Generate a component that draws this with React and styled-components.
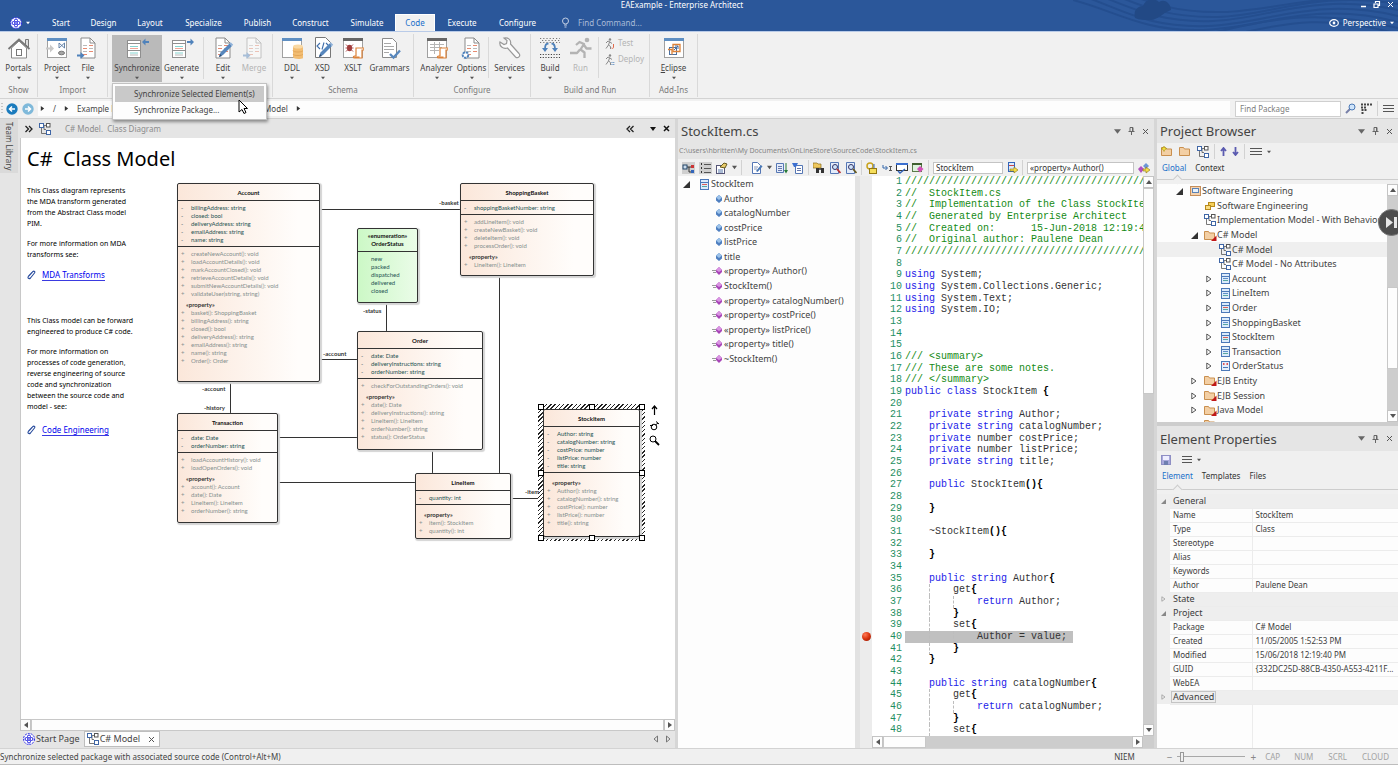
import React from "react";
import styled, { createGlobalStyle, css } from "styled-components";

// ------------------ Global ------------------
const GlobalStyle = createGlobalStyle`
  * {
    box-sizing: border-box;
  }

  body {
    margin: 0;
    background: #e5e5e5;
    color: #444;
    font-family: "Noto Sans", "Open Sans", sans-serif;
    font-size: 8px;
    line-height: 12px;
    overflow: hidden;
  }

  button, input {
    font: inherit;
    color: inherit;
    border: 0;
    padding: 0;
    margin: 0;
    background: none;
  }

  svg {
    display: block;
    flex: none;
  }
`;

const Window = styled.div`
  display: flex;
  flex-direction: column;
  height: 100vh;
  min-height: 600px;
  white-space: nowrap;
`;

// ------------------ Title bar and tabs ------------------
const Header = styled.header`
  position: relative;
  flex: none;
  display: grid;
  grid-template-rows: 14px 17px;
  background: #2b579a;
  color: #fff;
  overflow: hidden;
`;

const Swirl = styled.svg`
  position: absolute;
  right: 0;
  top: 0;
`;

const TitleRow = styled.div`
  position: relative;
  display: flex;
  align-items: center;
  justify-content: center;
  padding: 0 34px 4px 0;
  line-height: 10px;
`;

const WindowButtons = styled.div`
  position: absolute;
  right: 4px;
  top: 0;
  display: flex;
  gap: 6px;
`;

const TabRow = styled.div`
  position: relative;
  display: flex;
  align-items: stretch;
`;

const AppButton = styled.button`
  display: flex;
  align-items: center;
  gap: 4px;
  width: 41px;
  padding-left: 10px;
`;

const RibbonTab = styled.button`
  width: ${(p) => p.$w}px;
  font-size: 8px;
  ${(p) =>
    p.$active &&
    css`
      background: #f1f1f1;
      color: #1a6fc9;
      border: 1px solid #fff;
      border-bottom: 0;
    `}
`;

const FindCommand = styled.label`
  display: flex;
  align-items: center;
  gap: 8px;
  padding-left: 15px;
  color: #a9bbd8;

  input {
    width: 90px;
  }
  input::placeholder {
    color: #a9bbd8;
    opacity: 1;
  }
`;

const Perspective = styled.button`
  display: flex;
  align-items: center;
  gap: 4px;
  margin-left: auto;
  padding-right: 4px;
`;

// ------------------ Ribbon ------------------
const Ribbon = styled.div`
  flex: none;
  display: flex;
  height: 68px;
  padding: 2px 0 1px;
  background: #f1f1f1;
  border-top: 1px solid #b9cbe8;
  border-bottom: 1px solid #d3d3d3;
`;

const Group = styled.section`
  display: flex;
  flex-direction: column;
  border-right: 1px solid #d9d9d9;
`;

const GroupButtons = styled.div`
  display: flex;
  height: 50px;
  padding: 1px ${(p) => p.$right || 0}px 0 ${(p) => p.$left || 0}px;
`;

const GroupLabel = styled.div`
  text-align: center;
  color: #7b7b7b;
  line-height: 14px;
`;

const GroupSep = styled.div`
  width: 1px;
  margin: 2px 0 5px ${(p) => p.$gap}px;
  background: #d9d9d9;
`;

const ToolWrap = styled.div`
  position: relative;
`;

const Tool = styled.button`
  display: flex;
  flex-direction: column;
  align-items: center;
  width: ${(p) => p.$w}px;
  height: 47px;
  padding-top: 1px;
  color: ${(p) => (p.disabled ? "#b4b4b4" : "#444")};
  background: ${(p) => (p.$active ? "#bababa" : "none")};

  span {
    line-height: 16px;
  }
`;

const SmallTools = styled.div`
  display: flex;
  flex-direction: column;
  gap: 4px;
  width: 50px;
  padding: 2px 0 0 5px;
`;

const SmallTool = styled.button`
  display: flex;
  align-items: center;
  gap: 3px;
  height: 12px;
  color: #b4b4b4;
`;

const Menu = styled.div`
  position: absolute;
  z-index: 10;
  top: 48px;
  left: 0;
  width: 155px;
  padding: 2px;
  background: #fdfdfd;
  border: 1px solid #c2c2c2;
  box-shadow: 1px 2px 3px rgba(0, 0, 0, 0.4);
`;

const MenuItem = styled.button`
  display: block;
  width: 100%;
  height: ${(p) => (p.$active ? 16 : 15)}px;
  padding-left: 19px;
  text-align: left;
  color: #444;
  background: ${(p) => (p.$active ? "#c9c9c9" : "none")};
`;

const Cursor = styled.svg`
  position: absolute;
  left: 125px;
  top: 15px;
`;

// ------------------ Address bar ------------------
const AddressBar = styled.div`
  flex: none;
  display: flex;
  align-items: center;
  height: 19px;
  padding-left: 1px;
  background: #f1f1f1;
`;

const Crumbs = styled.nav`
  flex: 1;
  display: flex;
  align-items: center;
  gap: 8px;
  height: 15px;
  margin: 0 5px 0 4px;
  padding-left: 2px;
  background: #fdfdfd;
`;

const Crumb = styled.a`
  margin-left: ${(p) => p.$before || 0}px;
  color: #444;
  text-decoration: none;
`;

const FindPackage = styled.input`
  width: 106px;
  height: 16px;
  padding: 0 4px;
  background: #fff;
  border: 1px solid #cfcfcf;

  &::placeholder {
    color: #7d7d7d;
    opacity: 1;
  }
`;

const AddressTools = styled.div`
  display: flex;
  align-items: center;
  gap: 5px;
  width: 57px;
  padding-left: 4px;
`;

// ------------------ Shared panel parts ------------------
const Main = styled.main`
  flex: 1;
  min-height: 0;
  display: grid;
  grid-template-columns: 20px minmax(0, 655fr) minmax(0, 479fr) minmax(0, 244fr);
  background: #dcdcdc;
  border-top: 1px solid #cfcfcf;
`;

const SideStrip = styled.div`
  background: #e5e5e5;
`;

const SideTab = styled.button`
  width: 18px;
  height: 54px;
  writing-mode: vertical-rl;
  background: #dadada;
  font-size: 8px;
`;

const Panel = styled.section`
  display: flex;
  flex-direction: column;
  min-width: 0;
  min-height: 0;
  background: #f0f0f0;
  border-left: ${(p) => p.$edge || 0}px solid #d6d6d6;
  overflow: hidden;
`;

const PanelHead = styled.div`
  flex: none;
  display: flex;
  align-items: center;
  height: ${(p) => p.$h}px;
  padding: 0 5px 0 3px;
  background: #e5e5e5;
`;

const PanelTitle = styled.h2`
  flex: 1;
  margin: 0;
  font-size: 13px;
  font-weight: 400;
  line-height: 18px;
  color: #444;
`;

const HeadButtons = styled.div`
  display: flex;
  align-items: center;
  gap: 7px;
`;

const Bar = styled.div`
  flex: none;
  display: flex;
  align-items: center;
  gap: ${(p) => p.$gap || 5}px;
  height: 17px;
  padding: 0 4px;
  background: #f0f0f0;
`;

const BarSep = styled.div`
  width: 1px;
  height: 15px;
  background: #d2d2d2;
`;

const IconButton = styled.button`
  display: flex;
  align-items: center;
  justify-content: center;
  background: ${(p) => (p.$on ? "#cfcfcf" : "none")};
`;

const PanelTabs = styled.div`
  flex: none;
  display: flex;
  gap: 9px;
  height: ${(p) => p.$h}px;
  padding: 1px 5px 0;
  border-bottom: 1px solid #cdcdcd;
`;

const PanelTab = styled.button`
  position: relative;
  height: 14px;
  color: ${(p) => (p.$active ? "#1a6fc9" : "#333")};

  ${(p) =>
    p.$active &&
    css`
      &::after {
        content: "";
        position: absolute;
        left: 12px;
        bottom: ${p.$drop}px;
        width: 6px;
        height: 6px;
        background: #f0f0f0;
        border-top: 1px solid #cdcdcd;
        border-left: 1px solid #cdcdcd;
        transform: rotate(45deg);
      }
    `}
`;

// ------------------ Scroll bars ------------------
const ScrollTrack = styled.div`
  flex: none;
  display: flex;
  flex-direction: ${(p) => (p.$vertical ? "column" : "row")};
  width: ${(p) => (p.$vertical ? "11px" : "auto")};
  height: ${(p) => (p.$vertical ? "auto" : "12px")};
  background: #cdcdcd;
`;

const ScrollEnd = styled.button`
  display: flex;
  align-items: center;
  justify-content: center;
  width: 11px;
  height: 12px;
  background: #fdfdfd;
  border: 1px solid #c4c4c4;
`;

const Thumb = styled.div`
  flex: ${(p) => p.$size} 1 0;
  background: #fdfdfd;
  border: 1px solid #c8c8c8;
`;

const Space = styled.div`
  flex: ${(p) => p.$size} 1 0;
`;

// ------------------ Diagram ------------------
const DiagramName = styled.span`
  flex: 1;
  padding-left: 14px;
  color: #8c8c8c;
  font-size: 8px;
`;

const Canvas = styled.div`
  position: relative;
  flex: 1;
  min-height: 0;
  background: #fff;
  border-left: 1px solid #c8c8c8;
  overflow: hidden;
  color: #000;
`;

const Notes = styled.div`
  width: 150px;
  padding: 9px 0 0 6px;
  font-size: 8px;
  line-height: 11px;

  h1 {
    margin: 0;
    font-size: 20px;
    line-height: 24px;
    font-weight: 400;
  }
  p {
    margin: 0 0 9px;
    font-size: 7px;
    line-height: 11px;
  }
  p:first-of-type {
    margin-top: 14px;
  }
  p:last-of-type {
    margin-bottom: 12px;
  }
`;

const NoteLink = styled.a`
  display: flex;
  align-items: center;
  gap: 6px;
  margin-bottom: ${(p) => p.$below || 0}px;
  color: #0000ee;
  text-decoration: none;

  span {
    border-bottom: 1px solid #3a3ae0;
  }
`;

const Links = styled.svg`
  position: absolute;
  left: 0;
  top: 0;
`;

const Node = styled.div`
  position: absolute;
  left: ${(p) => p.$x}px;
  top: ${(p) => p.$y}px;
  width: ${(p) => p.$w}px;
  height: ${(p) => p.$h}px;
  background: ${(p) =>
    p.$green
      ? "linear-gradient(90deg, #ccf8c6, #eafce8)"
      : "linear-gradient(90deg, #fbe7da, #fffdfb 85%)"};
  border: 1px solid #333;
  border-radius: 2px;
  box-shadow: 1px 1px 1px 1px #d4d4d4;
  font-family: "Lato", sans-serif;
  font-size: 6px;
  line-height: 8px;
`;

const NodeTitle = styled.div`
  height: ${(p) => (p.$tall ? 23 : 17)}px;
  padding-top: ${(p) => (p.$tall ? 3 : 5)}px;
  text-align: center;
  font-weight: 700;
  color: #111;
  border-bottom: 1px solid #333;
`;

const Members = styled.div`
  padding: 3px 0 2px 3px;
  color: ${(p) => (p.$soft ? "#86908f" : "#245252")};

  & + & {
    border-top: 1px solid #333;
  }
`;

const Member = styled.div`
  display: grid;
  grid-template-columns: 10px 1fr;
`;

const Stereo = styled.div`
  margin-top: 3px;
  padding-left: 5px;
  font-weight: 700;
  color: #333;
`;

const RoleLabel = styled.span`
  position: absolute;
  left: ${(p) => p.$x}px;
  top: ${(p) => p.$y}px;
  font-family: "Lato", sans-serif;
  font-size: 6px;
  font-weight: 700;
  line-height: 8px;
  color: #333;
`;

const Selection = styled.div`
  position: absolute;
  left: 517px;
  top: 266px;
  width: 107px;
  height: 137px;
  background: repeating-linear-gradient(135deg, #222 0 1px, #fff 1px 3px);
`;

const Handle = styled.i`
  position: absolute;
  left: calc(${(p) => p.$x}% - 3px);
  top: calc(${(p) => p.$y}% - 3px);
  width: 6px;
  height: 6px;
  background: #fff;
  border: 1px solid #000;
`;

const HandleLayer = styled.div`
  position: absolute;
  left: 520px;
  top: 269px;
  width: 101px;
  height: 131px;
`;

const QuickLinks = styled.div`
  position: absolute;
  left: 628px;
  top: 267px;
  display: grid;
  gap: 4px;
`;

const DocTabs = styled.div`
  flex: none;
  display: flex;
  align-items: stretch;
  height: 17px;
  padding: 0 0 1px 1px;
  background: #e5e5e5;
`;

const DocTab = styled.button`
  display: flex;
  align-items: center;
  gap: 1px;
  padding: 0 4px 0 2px;
  font-size: 9px;
  background: ${(p) => (p.$active ? "#fdfdfd" : "none")};
  border: ${(p) => (p.$active ? "1px solid #bdbdbd" : "0")};

  svg:last-child {
    margin-left: ${(p) => (p.$active ? 7 : 0)}px;
  }
`;

const DocNav = styled.div`
  display: flex;
  align-items: center;
  gap: 8px;
  margin-left: auto;
  padding-right: 4px;
`;

// ------------------ Source code panel ------------------
const FilePath = styled.div`
  flex: none;
  height: 16px;
  padding-left: 1px;
  background: #e5e5e5;
  color: #858585;
  font-size: 7px;
  line-height: 16px;
`;

const CodeField = styled.input`
  width: ${(p) => p.$w}px;
  height: 12px;
  padding: 0 2px;
  background: #fff;
  border: 1px solid #c4c4c4;
  color: #333;
`;

const CodeBody = styled.div`
  flex: 1;
  min-height: 0;
  display: grid;
  grid-template-columns: 177px 5px 12px minmax(0, 1fr);
`;

const ClassPane = styled.div`
  background: #fdfdfd;
`;

const ClassTree = styled.ul`
  display: grid;
  grid-auto-rows: 1fr;
  align-items: center;
  height: 190px;
  margin: 0;
  padding: 1px 0 0 2px;
  list-style: none;
  font-size: 9px;
`;

const ClassRow = styled.li`
  display: flex;
  align-items: center;
  gap: 2px;
  padding-left: ${(p) => p.$indent}px;
`;

const Splitter = styled.div`
  background: #e2e2e2;
`;

const Gutter = styled.div`
  display: grid;
  grid-template-rows: repeat(48, minmax(0, 1fr)) 12px;
  justify-items: center;
  align-items: center;
  background: #ececec;
`;

const Breakpoint = styled.i`
  grid-row: 40;
  width: 9px;
  height: 9px;
  border-radius: 50%;
  background: radial-gradient(circle at 35% 30%, #ff7a55, #d8330f 50%, #8c1500);
`;

const EditorColumn = styled.div`
  display: flex;
  flex-direction: column;
  min-width: 0;
  min-height: 0;
`;

const EditorRow = styled.div`
  flex: 1;
  min-height: 0;
  display: flex;
`;

const Lines = styled.ol`
  flex: 1;
  min-width: 0;
  display: grid;
  grid-auto-rows: minmax(0, 1fr);
  margin: 0;
  padding: 0;
  list-style: none;
  overflow: hidden;
  background: #fff;
  color: #333;
  font-family: "Liberation Mono", monospace;
  font-size: 10px;
  line-height: 12px;
`;

const Line = styled.li`
  display: grid;
  grid-template-columns: 30px max-content;
  column-gap: 3px;
  min-height: 0;
  white-space: pre;
`;

const LineNo = styled.span`
  text-align: right;
  color: #1f8f62;
`;

const Source = styled.code`
  display: flex;
  font: inherit;
  padding-right: 6px;
  color: ${(p) => (p.$comment ? "#148a14" : "#333")};
  background: ${(p) => (p.$marked ? "#c0c0c0" : "none")};
`;

const Keyword = styled.span`
  color: #1b1be8;
`;

const Brace = styled.b`
  color: #000;
`;

const Indent = styled.span`
  width: 4ch;
  border-left: ${(p) => (p.$guide ? "1px dashed #bdbdbd" : "0")};
`;

// ------------------ Project browser ------------------
const BrowserBody = styled.div`
  flex: none;
  display: flex;
  height: 238px;
  margin-top: 4px;
  background: #fdfdfd;
  overflow: hidden;
`;

const BrowserTree = styled.ul`
  flex: 1;
  min-width: 0;
  display: grid;
  grid-auto-rows: 1fr;
  height: 248px;
  margin: 0;
  padding: 0;
  list-style: none;
  font-size: 9px;
`;

const BrowserRow = styled.li`
  display: flex;
  align-items: center;
  padding-left: ${(p) => 17 + p.$depth * 15}px;
  background: ${(p) => (p.$selected ? "#efefef" : "none")};
`;

const Twisty = styled.span`
  display: flex;
  justify-content: center;
  width: 10px;
  margin-right: 5px;
`;

const TreeIcon = styled.span`
  display: flex;
  justify-content: center;
  width: 12px;
  margin-right: 1px;
`;

const Divider = styled.div`
  flex: none;
  height: 4px;
  background: #cdcdcd;
`;

// ------------------ Element properties ------------------
const PropTable = styled.table`
  width: 100%;
  margin-top: 4px;
  border-collapse: collapse;
  table-layout: fixed;
  background: #fdfdfd;

  tr {
    height: 14px;
  }
  th, td {
    padding: 0 0 0 3px;
    text-align: left;
    font-weight: 400;
    line-height: 12px;
    color: #3c3c3c;
    border-bottom: 1px solid #ececec;
    overflow: hidden;
    text-overflow: ellipsis;
  }
  td {
    border-left: 1px solid #ececec;
  }
`;

const PropGroup = styled.tr`
  background: #eee;

  th {
    font-size: 9px;
  }
`;

const PropMargin = styled.td`
  && {
    padding: 0 0 0 4px;
    background: #eee;
    border: 0;
  }
`;

const PropRest = styled.div`
  flex: 1;
  display: grid;
  grid-template-columns: 96px 1fr;
  background: #fdfdfd;

  i {
    border-right: 1px solid #ececec;
  }
`;

const Boxed = styled.span`
  display: inline-block;
  margin-left: -2px;
  padding: 0 1px;
  border: 1px solid #c4c4c4;
  line-height: 10px;
`;

const PlayBadge = styled.button`
  position: absolute;
  right: -7px;
  top: 209px;
  width: 27px;
  height: 27px;
  border-radius: 50%;
  background: #4d4d4d;
  border: 1px solid #777;
  padding-left: 6px;
`;

// ------------------ Status bar ------------------
const StatusBar = styled.footer`
  flex: none;
  display: flex;
  align-items: center;
  height: 17px;
  padding: 0 9px 0 0;
  background: #f0f0f0;
  border-top: 1px solid #d3d3d3;
  border-bottom: 1px solid #bdbdbd;
`;

const StatusText = styled.span`
  flex: 1;
`;

const Zoom = styled.label`
  display: flex;
  align-items: center;
  gap: 5px;
  margin: 0 9px 0 32px;
  color: #888;
  font-size: 10px;

  input {
    appearance: none;
    width: 68px;
    height: 12px;
    background: linear-gradient(#a8a8a8, #a8a8a8) center / 100% 1px no-repeat;
  }
  input::-webkit-slider-thumb {
    appearance: none;
    width: 4px;
    height: 10px;
    background: #f0f0f0;
    border: 1px solid #999;
  }
`;

const Lock = styled.span`
  margin-left: ${(p) => p.$gap}px;
  color: #a2a2a2;
`;

// ------------------ Icons ------------------
const Arrow = ({ dir = "down", size = 6, color = "#555" }) => {
  const shapes = {
    down: "M0 1h6L3 5z",
    up: "M0 5h6L3 1z",
    left: "M5 0v6L1 3z",
    right: "M1 0v6l4-3z",
  };
  return (
    <svg width={size} height={size} viewBox="0 0 6 6">
      <path d={shapes[dir]} fill={color} />
    </svg>
  );
};

const Close = ({ color = "#555", bold }) => (
  <svg width="7" height="7" viewBox="0 0 7 7">
    <path d="M1 1l5 5M6 1L1 6" stroke={color} strokeWidth={bold ? 1.5 : 1} />
  </svg>
);

const Pin = () => (
  <svg width="7" height="8" viewBox="0 0 7 8">
    <path d="M2 .5h3v4H2zM.5 4.5h6M3.500 5v3M4.500 1v3" fill="none" stroke="#666" />
  </svg>
);

const Lines3 = ({ w = 12 }) => (
  <svg width={w} height="9" viewBox={`0 0 ${w} 9`}>
    <path d={`M0 1.500h${w}M0 4.500h${w}M0 7.500h${w}`} stroke="#555" strokeWidth="1.200" />
  </svg>
);

const Logo = ({ size = 12, bg = "#fff" }) => (
  <svg width={size} height={size} viewBox="0 0 12 12">
    <circle cx="6" cy="6" r="5.500" fill={bg} stroke="#2a2ae8" strokeWidth="1" strokeDasharray="2 1" />
    <g fill="none" stroke="#2020e0" strokeWidth="1">
      <circle cx="6" cy="3.500" r="1.500" />
      <circle cx="8.500" cy="6" r="1.500" />
      <circle cx="6" cy="8.500" r="1.500" />
      <circle cx="3.500" cy="6" r="1.500" />
    </g>
  </svg>
);

const DiagramIcon = ({ size = 12 }) => (
  <svg width={size} height={size} viewBox="0 0 12 12">
    <path d="M5 2.500h2M2.500 5v5.500H7M5 3v3.500h2" fill="none" stroke="#555" strokeWidth=".8" />
    <rect x=".5" y=".5" width="4" height="4" fill="#fff" stroke="#3f66a6" />
    <rect x="7.500" y=".5" width="3.500" height="3.500" fill="#fff" stroke="#555" />
    <rect x="7.500" y="7.500" width="4" height="4" fill="#fff" stroke="#3f66a6" />
  </svg>
);

const PageIcon = ({ faded, children }) => (
  <svg width="22" height="24" viewBox="0 0 22 24" opacity={faded ? 0.45 : 1}>
    <path d="M4 2h9l5 5v15H4z" fill="#fff" stroke="#8b8b8b" />
    <path d="M13 2v5h5" fill="none" stroke="#8b8b8b" />
    <path d="M6 9.500h4M6 15.500h4M12 12.500h4" stroke="#b9b9b9" />
    <path d="M12 9.500h4M6 12.500h4M12 15.500h4M6 18.500h4" stroke="#e88a70" />
    {children}
  </svg>
);

const WindowIcon = ({ top = "#5f8fc2", children }) => (
  <svg width="22" height="24" viewBox="0 0 22 24">
    <rect x="1.500" y="2.500" width="19" height="19" fill="#fff" stroke="#a0a0a0" />
    <rect x="1" y="2" width="20" height="3" fill={top} />
    {children}
  </svg>
);

const pencil = (
  <g>
    <path d="M7 21l1.500-4.500L17.500 7.500 20 10l-9 9z" fill="#5787bd" />
    <path d="M7 21l1-3 2 2z" fill="#2c4c74" />
    <path d="M17.500 7.500l1.200-1.200L21.200 8.800 20 10z" fill="#8fb2da" />
  </g>
);

const scroll = (
  <g>
    <path d="M14 12h8v2h-2v8h-7.500c-1.500 0-1.500-2 0-2H14z" fill="#fff" stroke="#dc8138" strokeWidth="1.200" />
    <path d="M11.500 20.500h6V22h-5z" fill="#dc8138" />
  </g>
);

const listBox = (
  <g>
    <rect x="2.500" y="4.500" width="13" height="17" fill="#fff" stroke="#8f8f8f" />
    <path d="M3 7.500h12M3 14.500h12" stroke="#8f8f8f" />
    <path d="M5 10.500h8M5 17h8" stroke="#84d4d0" />
    <path d="M5 12.500h8" stroke="#efa597" />
    <path d="M5 19h8" stroke="#b7b7b7" />
  </g>
);

const toolIcons = {
  portals: (
    <svg width="24" height="24" viewBox="0 0 24 24">
      <path d="M18.500 3.500h3v8l-3-3z" fill="#ddd" stroke="#777" />
      <path d="M4.500 12v10h15V12L12 5z" fill="#fff" stroke="#888" />
      <path d="M1.500 13L12 3.500 22.500 13" fill="none" stroke="#777" strokeWidth="1.800" />
      <rect x="9.500" y="13.500" width="5" height="6" fill="#fff" stroke="#777" />
    </svg>
  ),
  project: (
    <WindowIcon>
      <path d="M0 11.500h4v-3l4 4-4 4v-3H0z" fill="#c8c8c8" />
      <path d="M13 7v5l5.500-5v5z" fill="#fff" stroke="#56779f" strokeWidth=".9" />
      <ellipse cx="15.500" cy="17" rx="3" ry="1.800" fill="#a5a5a5" stroke="#777" />
    </WindowIcon>
  ),
  file: (
    <PageIcon>
      <path d="M0 18.500h3.500v-2.500l4 3.500-4 3.500v-2.500H0z" fill="#4f82bb" />
    </PageIcon>
  ),
  sync: (
    <svg width="24" height="24" viewBox="0 0 24 24">
      {listBox}
      <path d="M24 5h-3.500V2.500L17 6l3.500 3.500V7H24z" fill="#4f82bb" />
    </svg>
  ),
  generate: (
    <svg width="24" height="24" viewBox="0 0 24 24">
      {listBox}
      <path d="M17 5h3.500V2.500L24 6l-3.500 3.500V7H17z" fill="#4f82bb" />
    </svg>
  ),
  edit: <PageIcon>{pencil}</PageIcon>,
  merge: (
    <PageIcon faded>
      <path d="M0 18.500h3.500v-2.500l4 3.500-4 3.500v-2.500H0z" fill="#4f82bb" />
    </PageIcon>
  ),
  ddl: (
    <WindowIcon>
      <path d="M12 11v10c0 2.500 11 2.500 11 0V11z" fill="#f2bd72" />
      <ellipse cx="17" cy="10.500" rx="5" ry="2" fill="#f9d9a4" />
      <path d="M12 14.500c0 2 10 2 10 0M12 18c0 2 10 2 10 0" fill="none" stroke="#dea052" strokeWidth=".8" />
    </WindowIcon>
  ),
  xsd: (
    <svg width="22" height="24" viewBox="0 0 22 24">
      <path d="M3.500 1.500h10l5 5v15h-15z" fill="#fff" stroke="#777" />
      <path d="M8 7l-3 3 3 3M14 7l3 3-3 3M12 6.500L10 13.500" fill="none" stroke="#3f6eaa" strokeWidth="1.100" />
      {pencil}
    </svg>
  ),
  xslt: (
    <WindowIcon top="#666">
      <ellipse cx="7.500" cy="12" rx="2.500" ry="3.200" fill="#a13c3c" />
      <path d="M4 8.500l7 7M11 8.500l-7 7M3.500 12h8" stroke="#a13c3c" strokeWidth=".9" />
      {scroll}
    </WindowIcon>
  ),
  grammars: (
    <svg width="22" height="24" viewBox="0 0 22 24">
      <path d="M3.500 2.500h10l4 4v15h-14z" fill="#fff" stroke="#8b8b8b" />
      <path d="M5 7.500h7M5 10.500h10M5 13.500h10M5 16.500h5" stroke="#a8a8a8" />
      <path d="M11 18l3.500 3.500L21 14.500" fill="none" stroke="#5787bd" strokeWidth="2.300" />
    </svg>
  ),
  analyzer: (
    <WindowIcon top="#666">
      <path d="M4 8.500h14M4 11.500h12M4 14.500h9M8.500 6v12M13.500 6v6" stroke="#b5b5b5" />
      {scroll}
    </WindowIcon>
  ),
  options: (
    <PageIcon>
      <circle cx="4.500" cy="19" r="2.800" fill="#fff" stroke="#4f82bb" strokeWidth="2" strokeDasharray="2.500 .8" />
    </PageIcon>
  ),
  services: (
    <svg width="24" height="24" viewBox="0 0 24 24">
      <path
        d="M2 6l4 2.500 2.500-1L9 4.500 6 2c4-1 7.500 2 6.500 6l8.500 9.500c2 2.500-1 5.500-3.500 3.500L9.500 12C5 13.500 1 10 2 6z"
        fill="#fbfbfb"
        stroke="#999"
        strokeWidth="1.200"
      />
    </svg>
  ),
  build: (
    <svg width="22" height="24" viewBox="0 0 22 24">
      <path d="M1 2.500h20M3 4.500h18M1 6.500h20" stroke="#777" strokeWidth="1.200" strokeDasharray="1.200 2" />
      <path d="M9.500 7.500C7 7.500 6 9 6 13M12.500 7.500C15 7.500 16 9 16 13" fill="none" stroke="#4f82bb" strokeWidth="1.800" />
      <path d="M3 12h6l-3 4zM13 12h6l-3 4z" fill="#4f82bb" />
      <path d="M1 18.500h20M1 21.500h20" stroke="#444" strokeWidth="1.200" strokeDasharray="1.200 1.500" />
    </svg>
  ),
  run: (
    <svg width="24" height="24" viewBox="0 0 24 24">
      <circle cx="18" cy="4" r="2.300" fill="#b3b3b3" />
      <path
        d="M7 9l3.500-3 4.500 2-3.500 5.500 4 3v5.500M11 13.500l-3 3.500H1M15 9l2.500 3.500h5"
        fill="none"
        stroke="#b3b3b3"
        strokeWidth="2.300"
        strokeLinejoin="round"
      />
    </svg>
  ),
  eclipse: (
    <WindowIcon>
      <rect x="6.500" y="11.500" width="7" height="7" fill="#fff" stroke="#4a6f9f" />
      <path d="M10 8.500h7v7h-7z" fill="none" stroke="#dc8138" strokeWidth="1.300" />
      <path d="M5 13.500h4v5" fill="none" stroke="#dc8138" strokeWidth="1.300" />
      <path d="M11 14l4-4M12 10h3v3" fill="none" stroke="#4a6f9f" />
    </WindowIcon>
  ),
};

const Runner = ({ accent, dots }) => (
  <svg width="11" height="11" viewBox="0 0 11 11">
    <circle cx="6" cy="1.500" r="1.200" fill="#888" />
    <path d="M2 5l2-2 2 1 2 1.500M5.500 4L4.500 7l2 1.500V11M4.500 7L2 10.500" fill="none" stroke="#888" />
    {dots ? (
      <path d="M7.500 8.500h3M7.500 10.500h3" stroke={accent} strokeDasharray="1 .8" />
    ) : (
      <path d="M9.500 6v3.500c0 1-1.500 1-2 .5" fill="none" stroke={accent} />
    )}
  </svg>
);

const Folder = ({ mark, star }) => (
  <svg width="13" height="11" viewBox="0 0 13 11">
    <path d="M.5 9.500v-8h4l1 1.500h5v6.500z" fill="#f3cfa4" stroke="#c98f4e" />
    {mark && <path d="M12.500 5.500V11H7z" fill="#c01818" />}
    {star && <path d="M3 0l1 2 2 .5-2 1L3 5.500 2 3.500l-2-1L2 2z" fill="#f4e23a" stroke="#9a8a10" strokeWidth=".5" />}
  </svg>
);

const ClassIcon = ({ red }) => (
  <svg width="9" height="11" viewBox="0 0 9 11">
    <rect x=".5" y=".5" width="8" height="10" fill="#dcebfb" stroke="#4c78b8" />
    <path d="M1 3.500h7" stroke="#4c78b8" />
    <path d="M2 5.500h5" stroke={red ? "#d9625a" : "#5f8fc9"} />
    <path d="M2 7.500h5" stroke="#58a7a0" />
  </svg>
);

const EnumIcon = () => (
  <svg width="9" height="10" viewBox="0 0 9 10">
    <rect x=".5" y=".5" width="8" height="9" fill="#e8eefb" stroke="#4c78b8" />
    <path d="M2 3h1.500M5.500 3H7" stroke="#d22" strokeWidth="1.500" />
    <path d="M2 6.500h5" stroke="#4c78b8" />
  </svg>
);

const ModelIcon = () => (
  <svg width="11" height="10" viewBox="0 0 11 10">
    <rect x=".5" y=".5" width="10" height="9" fill="#f5d3b0" stroke="#c58e5a" />
    <rect x="2.500" y="2.500" width="6" height="4" fill="#e8f2fc" stroke="#5b83b5" />
  </svg>
);

const PackagesIcon = () => (
  <svg width="10" height="10" viewBox="0 0 10 10">
    <rect x="3.500" y="1.500" width="6" height="4" fill="#f5cf58" stroke="#b78a1c" />
    <rect x=".5" y="4.500" width="5" height="4" fill="#f9dd84" stroke="#b78a1c" />
  </svg>
);

const AttributeIcon = () => (
  <svg width="6" height="8" viewBox="0 0 6 8">
    <path d="M3 0l3 2.500v3L3 8 0 5.500v-3z" fill="#4f7fc0" />
    <path d="M3 0l3 2.500L3 5 0 2.500z" fill="#9cc2ea" />
  </svg>
);

const MethodIcon = () => (
  <svg width="10" height="8" viewBox="0 0 10 8">
    <path d="M0 3.500h4M1 5.500h3" stroke="#9a9a9a" />
    <path d="M7 0l3 3v2L7 8 4 5V3z" fill="#a845b8" />
    <path d="M7 0l3 3-3 2-3-2z" fill="#d995e2" />
  </svg>
);

const Twist = ({ open, small }) =>
  open ? (
    <svg width={small ? 5 : 7} height={small ? 5 : 7} viewBox="0 0 7 7">
      <path d="M7 0v7H0z" fill={small ? "#888" : "#333"} />
    </svg>
  ) : (
    <svg width={small ? 5 : 6} height={small ? 6 : 8} viewBox="0 0 6 8">
      <path d="M.8 1v6L5 4z" fill="none" stroke={small ? "#999" : "#555"} />
    </svg>
  );

const Clip = () => (
  <svg width="9" height="10" viewBox="0 0 9 10">
    <path d="M2 6l4-4.500c1-1 2.500.2 1.500 1.500L3.500 8C2 9.500.2 8 1.500 6.200L5 2.500" fill="none" stroke="#25499c" strokeWidth="1.100" />
  </svg>
);

const Magnifier = ({ color = "#4a78b5" }) => (
  <svg width="11" height="11" viewBox="0 0 11 11">
    <path d="M1 10l4-4" stroke="#777fa8" strokeWidth="2" />
    <circle cx="7" cy="4" r="3" fill="#cfe4fa" stroke={color} />
  </svg>
);

const NavCircle = ({ color, flip }) => (
  <svg width="12" height="12" viewBox="0 0 12 12">
    <circle cx="6" cy="6" r="5.700" fill={color} />
    <path d={flip ? "M3 6h5.500M6 3.500L8.500 6 6 8.500" : "M9 6H3.500M6 3.500L3.500 6 6 8.500"} fill="none" stroke="#fff" strokeWidth="1.500" />
  </svg>
);

const Chevrons = ({ left }) => (
  <svg width="8" height="8" viewBox="0 0 8 8">
    <path d={left ? "M4 1L1 4l3 3M7.500 1l-3 3 3 3" : "M.5 1l3 3-3 3M4 1l3 3-3 3"} fill="none" stroke="#222" strokeWidth="1.300" />
  </svg>
);

const VerticalArrow = ({ up }) => (
  <svg width="7" height="9" viewBox="0 0 7 9">
    <path d={up ? "M3.500 9V2M1 4l2.500-3L6 4" : "M3.500 0v7M1 5l2.500 3L6 5"} fill="none" stroke="#5b5bb0" strokeWidth="1.800" />
  </svg>
);

const SaveIcon = () => (
  <svg width="10" height="10" viewBox="0 0 10 10">
    <rect x=".5" y=".5" width="9" height="9" fill="#a9a9dc" stroke="#8f8fc4" />
    <rect x="2" y="1" width="6" height="4" fill="#eef" />
    <rect x="3" y="6" width="4" height="4" fill="#6f7fb0" />
  </svg>
);

const codeIcons = {
  tree: (
    <svg width="13" height="12" viewBox="0 0 13 12">
      <path d="M5 5h5M7 5v5h3" fill="none" stroke="#333" />
      <rect x="1" y="3" width="4" height="4" fill="#cde" stroke="#246" />
      <rect x="9" y="3" width="3" height="3" fill="#c33" />
      <rect x="9" y="8" width="3" height="3" fill="#36b" />
    </svg>
  ),
  numbers: (
    <svg width="13" height="12" viewBox="0 0 13 12">
      <path d="M2.500 1v2M2.500 5v2M2.500 9v2" stroke="#333" />
      <path d="M5 2.500h7M5 6.500h7M5 10.500h7" stroke="#555" />
    </svg>
  ),
  properties: (
    <svg width="12" height="12" viewBox="0 0 12 12">
      <rect x=".5" y="3.500" width="8" height="8" fill="#fff" stroke="#557" />
      <path d="M4 5l4-4 3 1-2 4z" fill="#e7cb6b" stroke="#665a20" />
      <path d="M2 8h5M2 10h5" stroke="#57a" />
    </svg>
  ),
  edit: (
    <svg width="12" height="12" viewBox="0 0 12 12">
      <path d="M1.500 .5h5l3 3v8h-8z" fill="#fff" stroke="#5577b5" />
      <path d="M3 5h4M3 7h3" stroke="#89b" />
      <path d="M5 9l5-6 1.500 1.500L6.500 10z" fill="#4a78b5" />
    </svg>
  ),
  down: (
    <svg width="12" height="12" viewBox="0 0 12 12">
      <path d="M.5 1.500h7v9h-7z" fill="#e4ecfa" stroke="#5577b5" />
      <path d="M2 4.500h4M2 6.500h4M2 8.500h4" stroke="#67a" />
      <path d="M10 1v9" stroke="#297a3a" />
      <path d="M8 8l2 3.500L12 8z" fill="#297a3a" />
    </svg>
  ),
  doc: (
    <svg width="12" height="12" viewBox="0 0 12 12">
      <path d="M3.500 3.500h7v8h-7z" fill="#fff" stroke="#5577b5" />
      <path d="M5 6.500h4M5 8.500h4" stroke="#67a" />
      <path d="M0 1h6L4 5H2z" fill="#3b6fd0" />
    </svg>
  ),
  find: (
    <svg width="12" height="12" viewBox="0 0 12 12">
      <path d="M0 1h4l1 1h3v4H0z" fill="#eec75d" stroke="#8a6d1c" strokeWidth=".7" />
      <rect x="3" y="6" width="3" height="5" fill="#333" />
      <rect x="8" y="6" width="3" height="5" fill="#333" />
      <path d="M5 7h4" stroke="#333" strokeWidth="1.500" />
    </svg>
  ),
  search: (
    <svg width="12" height="12" viewBox="0 0 12 12">
      <path d="M1.500 .5h8v11h-8z" fill="#e4ecfa" stroke="#5577b5" />
      <circle cx="6" cy="5" r="2.500" fill="#cfe4fa" stroke="#336" />
      <path d="M8 7l3.500 4" stroke="#b33" strokeWidth="1.800" />
    </svg>
  ),
  search2: (
    <svg width="12" height="12" viewBox="0 0 12 12">
      <path d="M1.500 .5h8v11h-8z" fill="#e4ecfa" stroke="#5577b5" />
      <circle cx="6" cy="5" r="2.500" fill="#cfe4fa" stroke="#336" />
      <path d="M8 7l3.500 4" stroke="#665a20" strokeWidth="1.800" />
    </svg>
  ),
  lock: (
    <svg width="12" height="12" viewBox="0 0 12 12">
      <circle cx="4" cy="4" r="3" fill="none" stroke="#c9a31c" strokeWidth="1.500" />
      <rect x="3.500" y="6.500" width="7" height="5" fill="#f5de5c" stroke="#94780f" />
      <path d="M8 2v4" stroke="#36b" />
    </svg>
  ),
  jump: (
    <svg width="10" height="12" viewBox="0 0 10 12">
      <path d="M1 3v3h4M3.500 4l2 2-2 2" fill="none" stroke="#36a" />
      <path d="M7 4.500h3M8.500 4v5M7 8.500h3" stroke="#555" />
    </svg>
  ),
  window: (
    <svg width="12" height="12" viewBox="0 0 12 12">
      <rect x=".5" y="1.500" width="11" height="7" fill="#fff" stroke="#333" />
      <path d="M0 2h12" stroke="#3b6fd0" strokeWidth="2" />
      <path d="M2 9l2 2 5-4" fill="none" stroke="#36b" strokeWidth="1.500" />
    </svg>
  ),
  run: (
    <svg width="12" height="12" viewBox="0 0 12 12">
      <rect x=".5" y="1.500" width="9" height="8" fill="#dff2df" stroke="#5a7a4a" />
      <path d="M0 2h10" stroke="#3f5f2f" strokeWidth="2" />
      <path d="M8 4l3.500 3L8 10.500 5 7z" fill="#d24fb8" />
    </svg>
  ),
  goto: (
    <svg width="11" height="12" viewBox="0 0 11 12">
      <rect x="1.500" y=".5" width="6" height="9" fill="#dcebfb" stroke="#36b" />
      <path d="M2 3.500h5" stroke="#c44" />
      <path d="M3 7h4V5l4 3-4 3V9H3z" fill="#f4dd4a" stroke="#8a7410" strokeWidth=".6" />
    </svg>
  ),
  gotoMember: (
    <svg width="12" height="12" viewBox="0 0 12 12">
      <path d="M8 1l3 3-3 3-3-3z" fill="#6b96d6" />
      <path d="M3 4l3 3-3 4-3-4z" fill="#b04fc0" />
      <path d="M5 7h3V5l4 3-4 3V9H5z" fill="#f4dd4a" stroke="#8a7410" strokeWidth=".6" />
    </svg>
  ),
};

// ------------------ Data ------------------
const ribbonTabs = [
  ["Start", 40],
  ["Design", 45],
  ["Layout", 48],
  ["Specialize", 59],
  ["Publish", 49],
  ["Construct", 57],
  ["Simulate", 56],
  ["Code", 40],
  ["Execute", 54],
  ["Configure", 57],
];

const nodes = [
  {
    name: "Account", x: 156, y: 45, w: 143, h: 199,
    attrs: ["billingAddress: string", "closed: bool", "deliveryAddress: string", "emailAddress: string", "name: string"],
    ops: ["createNewAccount(): void", "loadAccountDetails(): void", "markAccountClosed(): void", "retrieveAccountDetails(): void", "submitNewAccountDetails(): void", "validateUser(string, string)"],
    props: ["basket(): ShoppingBasket", "billingAddress(): string", "closed(): bool", "deliveryAddress(): string", "emailAddress(): string", "name(): string", "Order(): Order"],
  },
  {
    name: "ShoppingBasket", x: 439, y: 45, w: 134, h: 93,
    attrs: ["shoppingBasketNumber: string"],
    ops: ["addLineItem(): void", "createNewBasket(): void", "deleteItem(): void", "processOrder(): void"],
    props: ["LineItem(): LineItem"],
  },
  {
    name: "Order", x: 336, y: 193, w: 126, h: 119,
    attrs: ["date: Date", "deliveryInstructions: string", "orderNumber: string"],
    ops: ["checkForOutstandingOrders(): void"],
    props: ["date(): Date", "deliveryInstructions(): string", "LineItem(): LineItem", "orderNumber(): string", "status(): OrderStatus"],
  },
  {
    name: "Transaction", x: 156, y: 275, w: 101, h: 110,
    attrs: ["date: Date", "orderNumber: string"],
    ops: ["loadAccountHistory(): void", "loadOpenOrders(): void"],
    props: ["account(): Account", "date(): Date", "LineItem(): LineItem", "orderNumber(): string"],
  },
  {
    name: "LineItem", x: 394, y: 335, w: 96, h: 66,
    attrs: ["quantity: int"],
    ops: [],
    props: ["item(): StockItem", "quantity(): int"],
  },
  {
    name: "StockItem", x: 522, y: 271, w: 97, h: 128,
    attrs: ["Author: string", "catalogNumber: string", "costPrice: number", "listPrice: number", "title: string"],
    ops: [],
    props: ["Author(): string", "catalogNumber(): string", "costPrice(): number", "listPrice(): number", "title(): string"],
  },
];

const roles = [
  ["-basket", 418, 61],
  ["-status", 342, 169],
  ["-account", 302, 212],
  ["-account", 181, 247],
  ["-history", 183, 266],
  ["-item", 504, 350],
];

const handles = [[0, 0], [50, 0], [100, 0], [0, 50], [100, 50], [0, 100], [50, 100], [100, 100]];

const slashes = "/".repeat(41);
const source = [
  slashes,
  "//  StockItem.cs",
  "//  Implementation of the Class StockItem",
  "//  Generated by Enterprise Architect",
  "//  Created on:      15-Jun-2018 12:19:41",
  "//  Original author: Paulene Dean",
  slashes,
  "",
  "using System;",
  "using System.Collections.Generic;",
  "using System.Text;",
  "using System.IO;",
  "",
  "",
  "",
  "/// <summary>",
  "/// These are some notes.",
  "/// </summary>",
  "public class StockItem {",
  "",
  "    private string Author;",
  "    private string catalogNumber;",
  "    private number costPrice;",
  "    private number listPrice;",
  "    private string title;",
  "",
  "    public StockItem(){",
  "",
  "    }",
  "",
  "    ~StockItem(){",
  "",
  "    }",
  "",
  "    public string Author{",
  "        get{",
  "            return Author;",
  "        }",
  "        set{",
  "            Author = value;",
  "        }",
  "    }",
  "",
  "    public string catalogNumber{",
  "        get{",
  "            return catalogNumber;",
  "        }",
  "        set{",
];

const attributes = ["Author", "catalogNumber", "costPrice", "listPrice", "title"];
const methods = [
  "«property» Author()",
  "StockItem()",
  "«property» catalogNumber()",
  "«property» costPrice()",
  "«property» listPrice()",
  "«property» title()",
  "~StockItem()",
];

const browser = [
  { depth: 0, open: true, icon: <ModelIcon />, text: "Software Engineering" },
  { depth: 1, icon: <PackagesIcon />, text: "Software Engineering" },
  { depth: 1, icon: <DiagramIcon />, text: "Implementation Model - With Behaviors" },
  { depth: 1, open: true, icon: <Folder mark />, text: "C# Model" },
  { depth: 2, icon: <DiagramIcon />, text: "C# Model", selected: true },
  { depth: 2, icon: <DiagramIcon />, text: "C# Model - No Attributes" },
  { depth: 2, open: false, icon: <ClassIcon />, text: "Account" },
  { depth: 2, open: false, icon: <ClassIcon />, text: "LineItem" },
  { depth: 2, open: false, icon: <ClassIcon red />, text: "Order" },
  { depth: 2, open: false, icon: <ClassIcon />, text: "ShoppingBasket" },
  { depth: 2, open: false, icon: <ClassIcon red />, text: "StockItem" },
  { depth: 2, open: false, icon: <ClassIcon />, text: "Transaction" },
  { depth: 2, open: false, icon: <EnumIcon />, text: "OrderStatus" },
  { depth: 1, open: false, icon: <Folder mark />, text: "EJB Entity" },
  { depth: 1, open: false, icon: <Folder mark />, text: "EJB Session" },
  { depth: 1, open: false, icon: <Folder mark />, text: "Java Model" },
  { depth: 1, icon: <Folder />, text: "" },
];

const properties = [
  { group: "General", open: true },
  { name: "Name", value: "StockItem" },
  { name: "Type", value: "Class" },
  { name: "Stereotype", value: "" },
  { name: "Alias", value: "" },
  { name: "Keywords", value: "" },
  { name: "Author", value: "Paulene Dean" },
  { group: "State" },
  { group: "Project", open: true },
  { name: "Package", value: "C# Model" },
  { name: "Created", value: "11/05/2005 1:52:53 PM" },
  { name: "Modified", value: "15/06/2018 12:19:40 PM" },
  { name: "GUID", value: "{332DC25D-88CB-4350-A553-4211F..." },
  { name: "WebEA", value: "" },
  { group: "Advanced", boxed: true },
];

// ------------------ Small components ------------------
const RibbonTool = ({ icon, label, w, arrow, ...rest }) => (
  <Tool $w={w} {...rest}>
    {toolIcons[icon]}
    <span>{label}</span>
    {arrow && <Arrow size={4} />}
  </Tool>
);

const PanelButtons = () => (
  <HeadButtons>
    <IconButton aria-label="Menu"><Arrow size={7} color="#666" /></IconButton>
    <IconButton aria-label="Pin"><Pin /></IconButton>
    <IconButton aria-label="Close"><Close /></IconButton>
  </HeadButtons>
);

const highlight = (text) =>
  text.split(/(\b(?:using|public|private|class|string|return)\b|[(){}]+)/).map((part, i) => {
    if (i % 2 === 0) return part;
    return /[(){}]/.test(part) ? <Brace key={i}>{part}</Brace> : <Keyword key={i}>{part}</Keyword>;
  });

const CodeLine = ({ text, number }) => {
  const comment = text.startsWith("//");
  const depth = (text.length - text.trimStart().length) / 4;
  return (
    <Line>
      <LineNo>{number}</LineNo>
      <Source $comment={comment} $marked={number === 40}>
        {Array.from({ length: depth }, (_, i) => (
          <Indent key={i} $guide={i > 0} />
        ))}
        <span>{comment ? text : highlight(text.trimStart())}</span>
      </Source>
    </Line>
  );
};

const MemberList = ({ items, sign }) =>
  items.map((item) => (
    <Member key={item}>
      <span>{sign}</span>
      <span>{item}</span>
    </Member>
  ));

const ClassNode = ({ node }) => (
  <Node $x={node.x} $y={node.y} $w={node.w} $h={node.h}>
    <NodeTitle>{node.name}</NodeTitle>
    <Members><MemberList items={node.attrs} sign="-" /></Members>
    <Members $soft>
      <MemberList items={node.ops} sign="+" />
      <Stereo>«property»</Stereo>
      <MemberList items={node.props} sign="+" />
    </Members>
  </Node>
);

// ------------------ Sections ------------------
const AppHeader = () => (
  <Header>
    <Swirl width="325" height="31" viewBox="0 0 325 31">
      <g fill="none" stroke="#244e8f" strokeWidth="2">
        <path d="M0 0C40 10 70 32 130 30S240 0 325 22" />
        <path d="M10 -4C50 10 75 28 135 26S240 -4 325 16" />
        <path d="M22 -6C60 8 85 23 140 21S240 -8 325 10" />
        <path d="M34 -8C68 6 95 18 145 17S245 -10 325 4" />
        <path d="M46 -10C78 4 105 13 150 12S240 -6 325 -2" />
        <path d="M120 36C170 30 220 2 325 28" />
        <path d="M140 38C190 32 230 8 325 34" />
      </g>
      <path d="M62 18c-2-8 3-12 8-12 3-8 12-8 16-4 6-4 12 2 12 8-8 3-14 10-20 10s-12 0-16-2z" fill="#224985" />
    </Swirl>
    <TitleRow>
      EAExample - Enterprise Architect
      <WindowButtons>
        <IconButton aria-label="Minimize">
          <svg width="7" height="9"><path d="M1 6.500h5" stroke="#fff" strokeWidth="1.500" /></svg>
        </IconButton>
        <IconButton aria-label="Restore">
          <svg width="8" height="9"><path d="M2.500 3V1.500h4v4H5M1 4h4v3.500H1z" fill="none" stroke="#fff" strokeWidth="1.200" /></svg>
        </IconButton>
        <IconButton aria-label="Close window"><Close color="#fff" /></IconButton>
      </WindowButtons>
    </TitleRow>
    <TabRow>
      <AppButton aria-label="Application menu">
        <Logo size={12} />
        <Arrow size={4} color="#fff" />
      </AppButton>
      {ribbonTabs.map(([name, w]) => (
        <RibbonTab key={name} $w={w} $active={name === "Code"}>{name}</RibbonTab>
      ))}
      <FindCommand>
        <svg width="9" height="11" viewBox="0 0 9 11">
          <circle cx="4.500" cy="4" r="3" fill="none" stroke="#c3cfe4" />
          <path d="M3 8h3M3.500 10h2" stroke="#c3cfe4" />
        </svg>
        <input placeholder="Find Command..." aria-label="Find Command" />
      </FindCommand>
      <Perspective>
        <svg width="10" height="8" viewBox="0 0 10 8">
          <ellipse cx="5" cy="4" rx="4.300" ry="3.300" fill="none" stroke="#fff" strokeWidth="1.200" />
          <circle cx="5" cy="4" r="1.400" fill="#fff" />
        </svg>
        Perspective
        <Arrow size={4} color="#fff" />
      </Perspective>
    </TabRow>
  </Header>
);

const RibbonBar = () => (
  <Ribbon>
    <Group>
      <GroupButtons><RibbonTool icon="portals" label="Portals" w={37} arrow /></GroupButtons>
      <GroupLabel>Show</GroupLabel>
    </Group>
    <Group>
      <GroupButtons $left={3} $right={4}>
        <RibbonTool icon="project" label="Project" w={32} arrow />
        <RibbonTool icon="file" label="File" w={30} arrow />
      </GroupButtons>
      <GroupLabel>Import</GroupLabel>
    </Group>
    <Group>
      <GroupButtons $left={4} $right={6}>
        <ToolWrap>
          <RibbonTool icon="sync" label="Synchronize" w={50} arrow $active />
          <Menu role="menu">
            <MenuItem role="menuitem" $active>Synchronize Selected Element(s)</MenuItem>
            <MenuItem role="menuitem">Synchronize Package...</MenuItem>
            <Cursor width="10" height="16" viewBox="0 0 10 16">
              <path d="M1 1v12l3-2.500 2 4 2-1-2-4h3.500z" fill="#fff" stroke="#000" />
            </Cursor>
          </Menu>
        </ToolWrap>
        <RibbonTool icon="generate" label="Generate" w={39} arrow />
        <GroupSep $gap={2} />
        <RibbonTool icon="edit" label="Edit" w={38} arrow />
        <RibbonTool icon="merge" label="Merge" w={24} disabled />
      </GroupButtons>
    </Group>
    <Group>
      <GroupButtons $left={4} $right={2}>
        <RibbonTool icon="ddl" label="DDL" w={30} arrow />
        <RibbonTool icon="xsd" label="XSD" w={31} arrow />
        <RibbonTool icon="xslt" label="XSLT" w={30} />
        <RibbonTool icon="grammars" label="Grammars" w={43} />
      </GroupButtons>
      <GroupLabel>Schema</GroupLabel>
    </Group>
    <Group>
      <GroupButtons $left={3}>
        <RibbonTool icon="analyzer" label="Analyzer" w={39} arrow />
        <RibbonTool icon="options" label="Options" w={31} arrow />
        <GroupSep $gap={1} />
        <RibbonTool icon="services" label="Services" w={41} arrow />
      </GroupButtons>
      <GroupLabel>Configure</GroupLabel>
    </Group>
    <Group>
      <GroupButtons $left={3}>
        <RibbonTool icon="build" label="Build" w={32} arrow />
        <RibbonTool icon="run" label="Run" w={29} disabled />
        <GroupSep $gap={3} />
        <SmallTools>
          <SmallTool disabled><Runner accent="#e06a4a" />Test</SmallTool>
          <SmallTool disabled><Runner accent="#4f82bb" dots />Deploy</SmallTool>
        </SmallTools>
      </GroupButtons>
      <GroupLabel>Build and Run</GroupLabel>
    </Group>
    <Group>
      <GroupButtons><RibbonTool icon="eclipse" label={<><u>E</u>clipse</>} w={47} arrow /></GroupButtons>
      <GroupLabel>Add-Ins</GroupLabel>
    </Group>
  </Ribbon>
);

const Address = () => (
  <AddressBar>
    <svg width="5" height="13"><path d="M1 1v12" stroke="#999" strokeDasharray="1 2" /></svg>
    <IconButton aria-label="Back"><NavCircle color="#1a7bbd" /></IconButton>
    <svg width="4" height="4" />
    <IconButton aria-label="Forward"><NavCircle color="#7fb9da" flip /></IconButton>
    <Crumbs>
      <Arrow dir="right" size={5} color="#333" />
      <Crumb href="#root">/</Crumb>
      <Arrow dir="right" size={5} color="#333" />
      <Crumb href="#example">Example Model</Crumb>
      <Crumb href="#model" $before={109}>C# Model</Crumb>
      <Arrow dir="right" size={5} color="#333" />
    </Crumbs>
    <FindPackage placeholder="Find Package" aria-label="Find Package" />
    <AddressTools>
      <Magnifier />
      <svg width="11" height="11"><path d="M0 1.500h11M0 4.500h5M1.500 6v5M4.500 6v2" stroke="#444" strokeWidth="2" strokeDasharray="2 1" /></svg>
      <BarSep />
      <Lines3 w={11} />
    </AddressTools>
  </AddressBar>
);

const DiagramPanel = () => (
  <Panel>
    <PanelHead $h={19}>
      <svg width="2" height="8" />
      <Chevrons />
      <svg width="6" height="8" />
      <DiagramIcon size={12} />
      <DiagramName>C# Model.&nbsp; Class Diagram</DiagramName>
      <HeadButtons>
        <Chevrons left />
        <svg width="2" height="6" />
        <Arrow color="#111" />
        <Close color="#111" bold />
      </HeadButtons>
    </PanelHead>
    <Canvas>
      <Notes>
        <h1>C#&nbsp; Class Model</h1>
        <p>This Class diagram represents<br />the MDA transform generated<br />from the Abstract Class model<br />PIM.</p>
        <p>For more information on MDA<br />transforms see:</p>
        <NoteLink href="#mda" $below={34}><Clip /><span>MDA Transforms</span></NoteLink>
        <p>This Class model can be forward<br />engineered to produce C# code.</p>
        <p>For more information on<br />processes of code generation,<br />reverse engineering of source<br />code and synchronization<br />between the source code and<br />model - see:</p>
        <NoteLink href="#engineering"><Clip /><span>Code Engineering</span></NoteLink>
      </Notes>
      <Links width="654" height="580" fill="none" stroke="#333">
        <path d="M298 71.500H440M365.500 163v30M298 221.500h39M209.500 242v34M256 299.500h81M256 344.500h139M411.500 310v26M478.500 136v200M489 360.500h30" />
      </Links>
      <Selection />
      {nodes.map((node) => (
        <ClassNode key={node.name} node={node} />
      ))}
      <Node $x={336} $y={90} $w={61} $h={75} $green>
        <NodeTitle $tall>«enumeration»<br />OrderStatus</NodeTitle>
        <Members>
          <MemberList items={["new", "packed", "dispatched", "delivered", "closed"]} sign="" />
        </Members>
      </Node>
      {roles.map(([text, x, y]) => (
        <RoleLabel key={text + x} $x={x} $y={y}>{text}</RoleLabel>
      ))}
      <HandleLayer>
        {handles.map(([x, y]) => (
          <Handle key={`${x}-${y}`} $x={x} $y={y} />
        ))}
      </HandleLayer>
      <QuickLinks>
        <svg width="11" height="11"><path d="M5.500 10V1M3 4l2.500-3L8 4" fill="none" stroke="#000" strokeWidth="1.200" /></svg>
        <svg width="11" height="11">
          <circle cx="5" cy="7" r="2.800" fill="#fff" stroke="#000" />
          <path d="M1 5.500h3M6.500 5L9 3M7 1.500L10 4" stroke="#000" />
        </svg>
        <svg width="11" height="11"><circle cx="4" cy="4" r="3" fill="none" stroke="#000" /><path d="M6 6l4 4" stroke="#000" strokeWidth="1.800" /></svg>
      </QuickLinks>
    </Canvas>
    <ScrollTrack>
      <ScrollEnd aria-label="Scroll left"><Arrow dir="left" /></ScrollEnd>
      <Thumb $size={1} />
      <ScrollEnd aria-label="Scroll right"><Arrow dir="right" /></ScrollEnd>
    </ScrollTrack>
    <DocTabs>
      <DocTab><Logo size={12} />Start Page</DocTab>
      <DocTab $active><DiagramIcon size={12} />C# Model<Close /></DocTab>
      <DocNav>
        <svg width="5" height="8"><path d="M4.500 1v6L1 4z" fill="none" stroke="#777" /></svg>
        <svg width="5" height="8"><path d="M.5 1v6L4 4z" fill="none" stroke="#777" /></svg>
      </DocNav>
    </DocTabs>
  </Panel>
);

const CodePanel = () => (
  <Panel $edge={3}>
    <PanelHead $h={24}>
      <PanelTitle>StockItem.cs</PanelTitle>
      <PanelButtons />
    </PanelHead>
    <FilePath>C:\users\hbritten\My Documents\OnLineStore\SourceCode\StockItem.cs</FilePath>
    <Bar $gap={4}>
      <IconButton $on aria-label="Structure tree">{codeIcons.tree}</IconButton>
      <IconButton $on aria-label="Line numbers">{codeIcons.numbers}</IconButton>
      <IconButton aria-label="Properties">{codeIcons.properties}</IconButton>
      <Arrow size={5} />
      <BarSep />
      <svg width="1" height="1" />
      <IconButton aria-label="Editor options">{codeIcons.edit}</IconButton>
      <Arrow size={5} />
      <IconButton aria-label="Save source">{codeIcons.down}</IconButton>
      <IconButton aria-label="Synchronize">{codeIcons.doc}</IconButton>
      <BarSep />
      <IconButton aria-label="Find in project">{codeIcons.find}</IconButton>
      <IconButton aria-label="Find in file">{codeIcons.search}</IconButton>
      <IconButton aria-label="Find again">{codeIcons.search2}</IconButton>
      <BarSep />
      <IconButton aria-label="Lock">{codeIcons.lock}</IconButton>
      <IconButton aria-label="Jump">{codeIcons.jump}</IconButton>
      <IconButton aria-label="Windows">{codeIcons.window}</IconButton>
      <IconButton aria-label="Run">{codeIcons.run}</IconButton>
      <BarSep />
      <CodeField $w={70} defaultValue="StockItem" aria-label="Class" />
      <IconButton aria-label="Go to class">{codeIcons.goto}</IconButton>
      <BarSep />
      <CodeField $w={107} defaultValue="«property» Author()" aria-label="Member" />
      <IconButton aria-label="Go to member">{codeIcons.gotoMember}</IconButton>
    </Bar>
    <CodeBody>
      <ClassPane>
        <ClassTree>
          <ClassRow $indent={3}>
            <Twist open />
            <svg width="6" height="6" />
            <ClassIcon red />
            StockItem
          </ClassRow>
          {attributes.map((name) => (
            <ClassRow key={name} $indent={36}><AttributeIcon />{name}</ClassRow>
          ))}
          {methods.map((name) => (
            <ClassRow key={name} $indent={32}><MethodIcon />{name}</ClassRow>
          ))}
        </ClassTree>
      </ClassPane>
      <Splitter />
      <Gutter><Breakpoint /></Gutter>
      <EditorColumn>
        <EditorRow>
          <Lines>
            {source.map((text, i) => (
              <CodeLine key={i} text={text} number={i + 1} />
            ))}
          </Lines>
          <ScrollTrack $vertical>
            <ScrollEnd aria-label="Scroll up"><Arrow dir="up" /></ScrollEnd>
            <Thumb $size={205} />
            <Space $size={331} />
            <ScrollEnd aria-label="Scroll down"><Arrow /></ScrollEnd>
          </ScrollTrack>
        </EditorRow>
        <ScrollTrack>
          <ScrollEnd aria-label="Scroll code left"><Arrow dir="left" /></ScrollEnd>
          <Thumb $size={43} />
          <Space $size={215} />
          <ScrollEnd aria-label="Scroll code right"><Arrow dir="right" /></ScrollEnd>
          <svg width="11" height="11" />
        </ScrollTrack>
      </EditorColumn>
    </CodeBody>
  </Panel>
);

const RightPanel = () => (
  <Panel $edge={3}>
    <PanelHead $h={24}>
      <PanelTitle>Project Browser</PanelTitle>
      <PanelButtons />
    </PanelHead>
    <Bar>
      <IconButton aria-label="New package"><Folder star /></IconButton>
      <IconButton aria-label="Open package"><Folder /></IconButton>
      <IconButton aria-label="New diagram"><DiagramIcon /></IconButton>
      <BarSep />
      <IconButton aria-label="Move up"><VerticalArrow up /></IconButton>
      <IconButton aria-label="Move down"><VerticalArrow /></IconButton>
      <BarSep />
      <Lines3 />
      <Arrow size={4} />
    </Bar>
    <PanelTabs $h={20}>
      <PanelTab $active $drop={-8}>Global</PanelTab>
      <PanelTab>Context</PanelTab>
    </PanelTabs>
    <BrowserBody>
      <BrowserTree>
        {browser.map((row, i) => (
          <BrowserRow key={i} $depth={row.depth} $selected={row.selected}>
            <Twisty>{row.open !== undefined && <Twist open={row.open} />}</Twisty>
            <TreeIcon>{row.icon}</TreeIcon>
            {row.text}
          </BrowserRow>
        ))}
      </BrowserTree>
      <ScrollTrack $vertical>
        <ScrollEnd aria-label="Scroll tree up"><Arrow dir="up" /></ScrollEnd>
        <Space $size={92} />
        <Thumb $size={81} />
        <Space $size={41} />
        <ScrollEnd aria-label="Scroll tree down"><Arrow /></ScrollEnd>
      </ScrollTrack>
    </BrowserBody>
    <Divider />
    <PanelHead $h={25}>
      <PanelTitle>Element Properties</PanelTitle>
      <PanelButtons />
    </PanelHead>
    <Bar>
      <IconButton aria-label="Save"><SaveIcon /></IconButton>
      <svg width="1" height="2" />
      <Lines3 w={10} />
      <Arrow size={4} />
    </Bar>
    <PanelTabs $h={22}>
      <PanelTab $active $drop={-10}>Element</PanelTab>
      <PanelTab>Templates</PanelTab>
      <PanelTab>Files</PanelTab>
    </PanelTabs>
    <PropTable>
      <colgroup>
        <col width="13" />
        <col width="82" />
        <col />
      </colgroup>
      <tbody>
        {properties.map((row) =>
          row.group ? (
            <PropGroup key={row.group}>
              <PropMargin><Twist open={row.open} small /></PropMargin>
              <th colSpan="2">{row.boxed ? <Boxed>{row.group}</Boxed> : row.group}</th>
            </PropGroup>
          ) : (
            <tr key={row.name}>
              <PropMargin />
              <th>{row.name}</th>
              <td>{row.value}</td>
            </tr>
          )
        )}
      </tbody>
    </PropTable>
    <PropRest><i /></PropRest>
  </Panel>
);

// ------------------ App ------------------
const App = () => (
  <Window>
    <GlobalStyle />
    <AppHeader />
    <RibbonBar />
    <Address />
    <Main>
      <SideStrip><SideTab>Team Library</SideTab></SideStrip>
      <DiagramPanel />
      <CodePanel />
      <RightPanel />
    </Main>
    <StatusBar>
      <StatusText>Synchronize selected package with associated source code (Control+Alt+M)</StatusText>
      <span>NIEM</span>
      <Zoom>
        <span>−</span>
        <input type="range" min="0" max="100" defaultValue="4" aria-label="Zoom" />
        <span>+</span>
      </Zoom>
      <Lock>CAP</Lock>
      <Lock $gap={14}>NUM</Lock>
      <Lock $gap={15}>SCRL</Lock>
      <Lock $gap={15}>CLOUD</Lock>
    </StatusBar>
    <PlayBadge aria-label="Show next panel">
      <svg width="14" height="13" viewBox="0 0 14 13">
        <path d="M1 1v11l7-5.500zM9 1h3v11H9z" fill="#e6e6e6" />
      </svg>
    </PlayBadge>
  </Window>
);

export default App;
